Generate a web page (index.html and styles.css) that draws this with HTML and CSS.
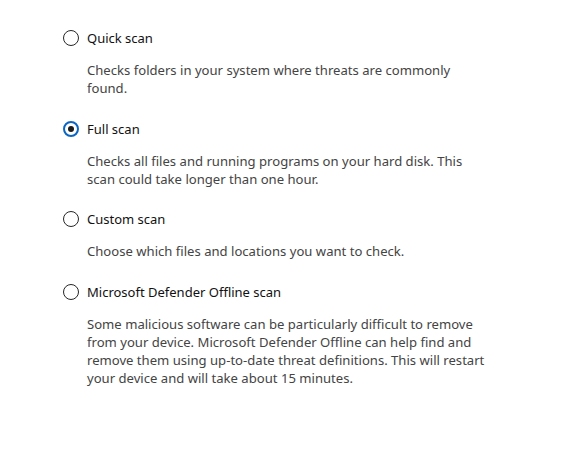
FILE: index.html
```html
<!DOCTYPE html>
<html>
<head>
    <title>Scan options</title>
    <link rel="stylesheet" href="styles.css">
</head>
<body>
    <div class="options">
        <div class="option">
            <div class="option-title">
                <span class="radio"></span>
                <span>Quick scan</span>
            </div>
            <p class="option-desc">Checks folders in your system where threats are commonly found.</p>
        </div>
        <div class="option">
            <div class="option-title">
                <span class="radio checked"></span>
                <span>Full scan</span>
            </div>
            <p class="option-desc">Checks all files and running programs on your hard disk. This scan could take longer than one hour.</p>
        </div>
        <div class="option">
            <div class="option-title">
                <span class="radio"></span>
                <span>Custom scan</span>
            </div>
            <p class="option-desc">Choose which files and locations you want to check.</p>
        </div>
        <div class="option">
            <div class="option-title">
                <span class="radio"></span>
                <span>Microsoft Defender Offline scan</span>
            </div>
            <p class="option-desc">Some malicious software can be particularly difficult to remove from your device. Microsoft Defender Offline can help find and remove them using up-to-date threat definitions. This will restart your device and will take about 15 minutes.</p>
        </div>
    </div>
</body>
</html>
```

FILE: styles.css
```css
body {
    margin: 0;
    background-color: #ffffff;
    font-family: "Noto Sans", "Open Sans", sans-serif;
    color: #1b1b1b;
}
.options {
    padding: 28px 0 0 63px;
    width: 426px;
}
.option {
    margin-bottom: 21.5px;
}
.option-title {
    display: flex;
    align-items: center;
    gap: 8px;
    height: 20px;
    font-size: 13px;
    color: #111111;
}
.radio {
    box-sizing: border-box;
    width: 16px;
    height: 16px;
    border: 1.6px solid #262626;
    border-radius: 50%;
    display: flex;
    align-items: center;
    justify-content: center;
}
.radio.checked {
    border: 2px solid #0a66c2;
}
.radio.checked::after {
    content: "";
    width: 6px;
    height: 6px;
    border-radius: 50%;
    background-color: #1b1b1b;
}
.option-desc {
    margin: 13px 0 0 24px;
    font-size: 13.1px;
    line-height: 18px;
    color: #444444;
}
```
